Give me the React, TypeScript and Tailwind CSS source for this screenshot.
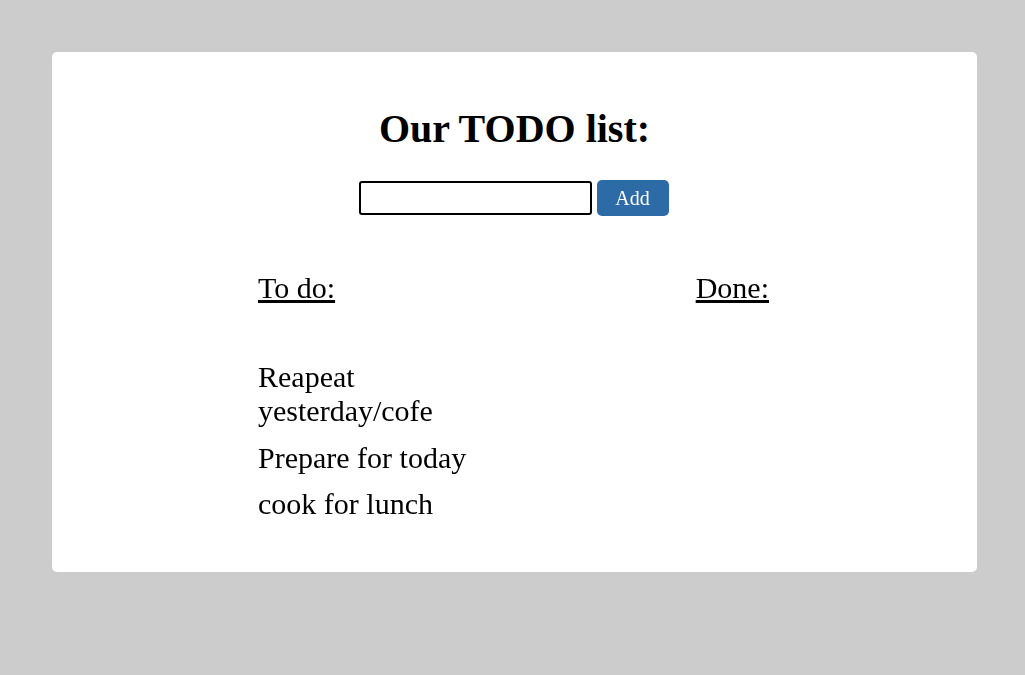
export default function App() {
  const todos = ["Reapeat yesterday/cofe", "Prepare for today", "cook for lunch"];

  return (
    <div className="min-h-[675px] bg-[#cccccc] pt-[52px] font-['Liberation_Serif','Times_New_Roman',serif] text-black">
      <div className="ml-[52px] w-[925px] h-[520px] bg-white rounded-[5px] pt-[54px]">
        <h1 className="text-center text-[40px] leading-[46px] font-bold">Our TODO list:</h1>

        <div className="mt-[28px] flex items-center justify-center gap-[5px] pr-[2px]">
          <input
            type="text"
            autoFocus
            className="w-[233px] h-[34px] border-2 border-black rounded-[3px] px-2 text-[18px] outline-none"
          />
          <button className="w-[72px] h-[36px] bg-[#2d6ba7] text-white text-[20px] rounded-[5px]">Add</button>
        </div>

        {/* columns */}
        <div className="mt-[55px] flex justify-between pl-[206px] pr-[208px] text-[30px] leading-[34.5px]">
          <div className="w-[240px]">
            <h2 className="underline">To do:</h2>
            <ul className="mt-[54px] flex flex-col gap-[12px]">
              {todos.map((t) => (
                <li key={t}>{t}</li>
              ))}
            </ul>
          </div>
          <div>
            <h2 className="underline">Done:</h2>
          </div>
        </div>
      </div>
    </div>
  );
}
